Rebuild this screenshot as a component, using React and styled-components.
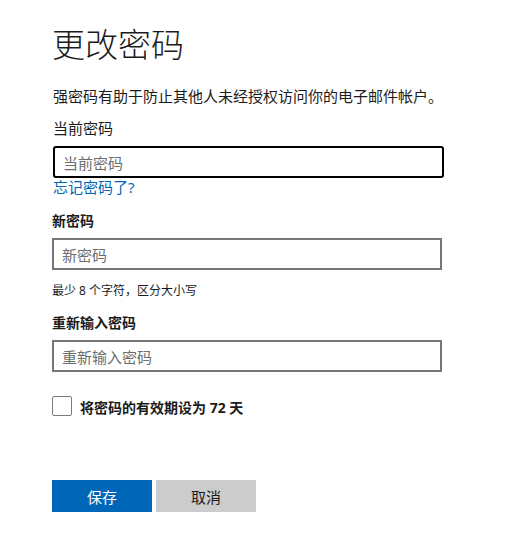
import React from "react";
import styled, { createGlobalStyle } from "styled-components";

const Global = createGlobalStyle`
  html, body { margin: 0; padding: 0; background: #ffffff; }
  body {
    font-family: "Noto Sans", "Noto Sans CJK SC", sans-serif;
    color: #1b1b1b;
  }
  * { box-sizing: border-box; }
`;

const Page = styled.div`
  display: flex;
  flex-direction: column;
  padding: 23px 52px 0 52px;
  width: 509px;
  min-height: 550px;
`;

const Title = styled.h1`
  margin: 0;
  font-size: 33px;
  line-height: 40px;
  font-weight: 300;
  color: #1b1b1b;
  font-family: "Noto Sans CJK SC", sans-serif;
`;

const Description = styled.p`
  margin: 23px 0 0 1px;
  font-size: 15px;
  line-height: 20px;
  font-family: "Noto Sans CJK SC", sans-serif;
`;

const Field = styled.div`
  display: flex;
  flex-direction: column;
  margin-top: ${(p) => p.$top}px;
`;

const Label = styled.label`
  font-size: ${(p) => (p.$strong ? 14 : 15)}px;
  font-weight: ${(p) => (p.$strong ? 700 : 400)};
  line-height: 20px;
  margin-left: ${(p) => (p.$strong ? 0 : 1)}px;
  font-family: "Noto Sans CJK SC", sans-serif;
`;

const Input = styled.input`
  margin-top: 8px;
  margin-left: ${(p) => (p.$focused ? 1 : 0)}px;
  width: ${(p) => (p.$focused ? 391 : 390)}px;
  height: 32px;
  padding: 0 8px;
  border: 2px solid ${(p) => (p.$focused ? "#000000" : "#767676")};
  border-radius: ${(p) => (p.$focused ? 3 : 0)}px;
  font-size: 15px;
  font-family: "Noto Sans CJK SC", sans-serif;
  color: #1b1b1b;
  background: #fff;
  outline: none;
  &::placeholder { color: #6e6e6e; }
`;

const Link = styled.a`
  font-size: 15px;
  line-height: 18px;
  color: #0067b8;
  text-decoration: none;
  margin-left: 1px;
  font-family: "Noto Sans", "Noto Sans CJK SC", sans-serif;
`;

const Hint = styled.div`
  margin-top: 12px;
  font-size: 12px;
  line-height: 18px;
  font-family: "Noto Sans", "Noto Sans CJK SC", sans-serif;
`;

const CheckRow = styled.label`
  display: flex;
  align-items: center;
  gap: 8px;
  margin-top: 24px;
  height: 20px;
`;

const Box = styled.input`
  appearance: none;
  margin: 0;
  width: 20px;
  height: 20px;
  border: 1px solid #7a7a7a;
  border-radius: 2px;
  background: #fff;
`;

const CheckText = styled.span`
  font-size: 14px;
  font-weight: 700;
  line-height: 20px;
  margin-top: 3px;
  font-family: "Noto Sans", "Noto Sans CJK SC", sans-serif;
`;

const Actions = styled.div`
  display: flex;
  gap: 4px;
  margin-top: 64px;
`;

const Button = styled.button`
  width: 100px;
  height: 32px;
  border: none;
  padding: 0;
  font-size: 15px;
  font-family: "Noto Sans CJK SC", sans-serif;
  background: ${(p) => (p.$primary ? "#0067b8" : "#cccccc")};
  color: ${(p) => (p.$primary ? "#ffffff" : "#1b1b1b")};
`;

export default function App() {
  return (
    <>
      <Global />
      <Page>
        <Title>更改密码</Title>
        <Description>强密码有助于防止其他人未经授权访问你的电子邮件帐户。</Description>
        <Field $top={12}>
          <Label>当前密码</Label>
          <Input $focused type="password" placeholder="当前密码" autoFocus />
          <Link href="#">忘记密码了?</Link>
        </Field>
        <Field $top={14}>
          <Label $strong>新密码</Label>
          <Input type="password" placeholder="新密码" />
          <Hint>最少 8 个字符，区分大小写</Hint>
        </Field>
        <Field $top={12}>
          <Label $strong>重新输入密码</Label>
          <Input type="password" placeholder="重新输入密码" />
        </Field>
        <CheckRow>
          <Box type="checkbox" />
          <CheckText>将密码的有效期设为 72 天</CheckText>
        </CheckRow>
        <Actions>
          <Button $primary>保存</Button>
          <Button>取消</Button>
        </Actions>
      </Page>
    </>
  );
}
